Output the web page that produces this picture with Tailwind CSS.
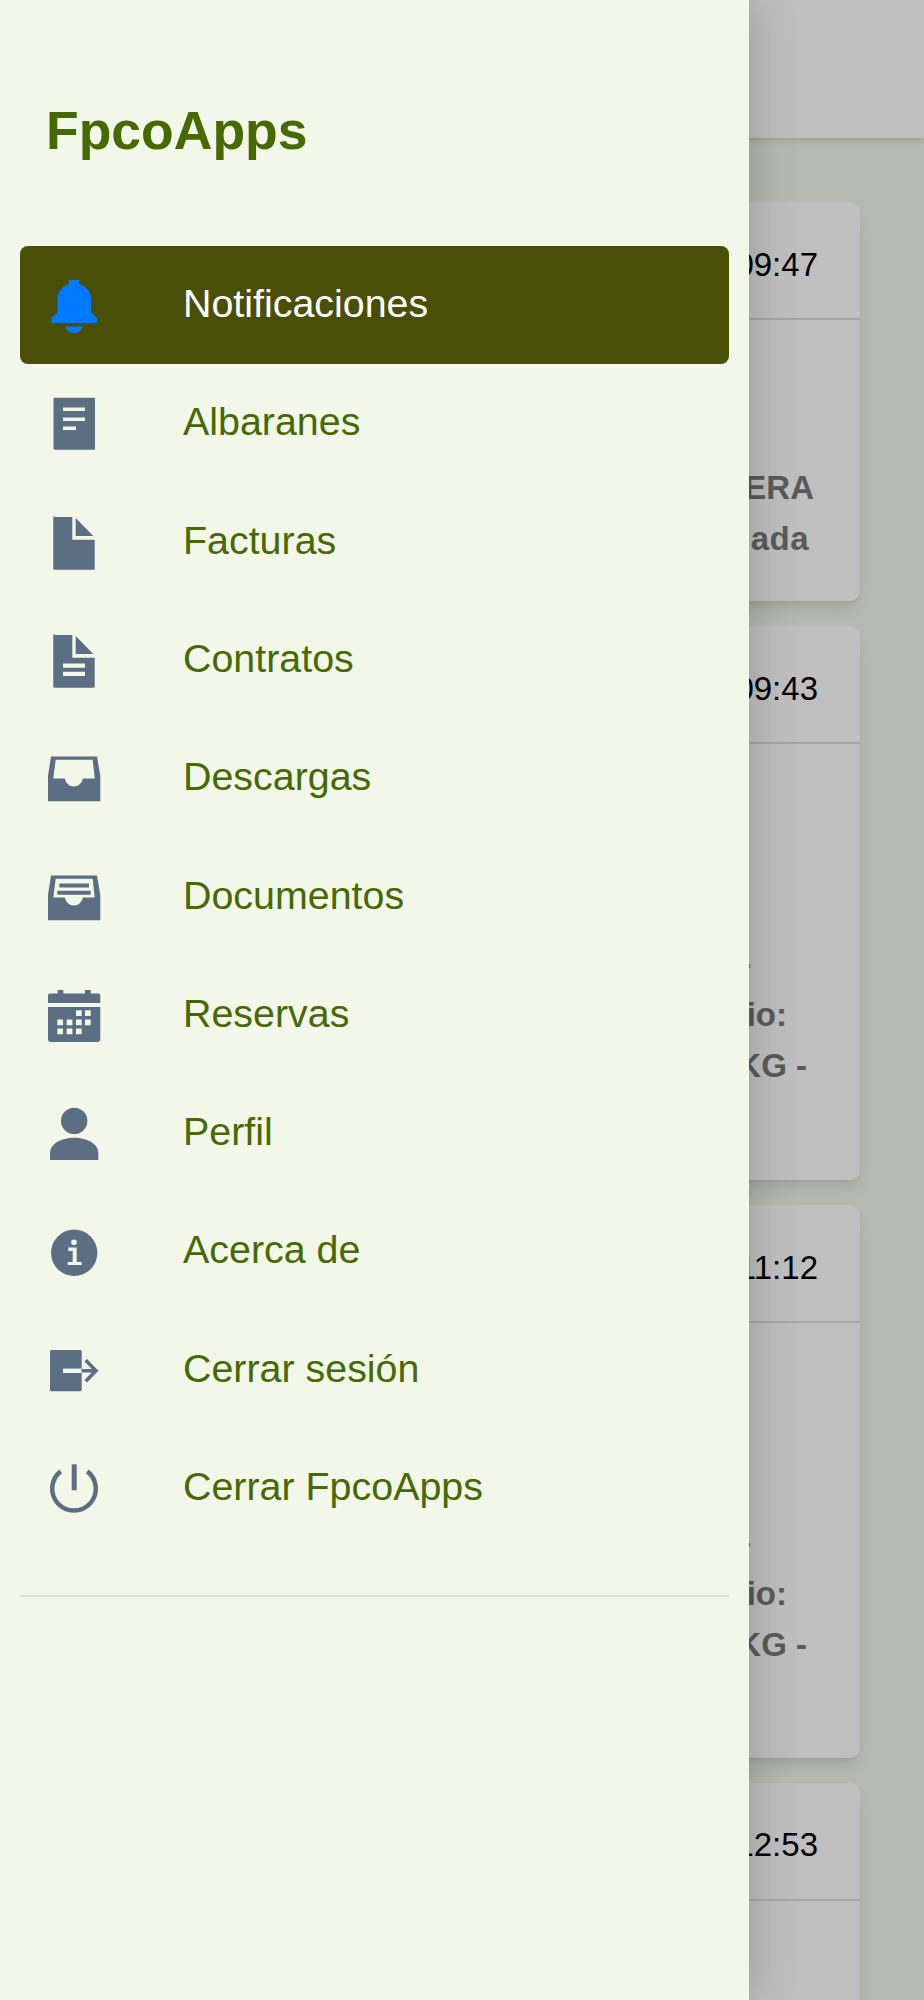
<!DOCTYPE html>
<html lang="es">

<head>
  <meta charset="UTF-8" />
  <meta name="viewport" content="width=device-width, initial-scale=1.0" />
  <title>FpcoApps</title>
  <script src="https://cdn.jsdelivr.net/npm/@tailwindcss/browser@4"></script>
</head>

<body class="bg-[#f3f7ea] font-['Liberation_Sans',Arial,sans-serif]">
  <div class="relative h-[2000px] w-[924px] overflow-hidden">

    <!-- Pantalla de fondo -->
    <header class="h-[138px] bg-white shadow-md"></header>
    <main class="flex flex-col gap-[25px] pl-[64px] pr-[64px] pt-[64px]">

      <article class="h-[399px] shrink-0 rounded-[10px] bg-white shadow-lg">
        <div class="h-[118px] border-b-2 border-[#dedede] pr-[42px] pt-[44px] text-right text-[33px] leading-[37px] text-black">09:47</div>
        <div class="pr-[46px] pt-[142px] text-right text-[33px] font-bold leading-[51px] text-[#787878]">
          <p>ERA</p>
          <p class="pr-[5px] tracking-[0.5px]">ada</p>
        </div>
      </article>

      <article class="h-[554px] shrink-0 rounded-[10px] bg-white shadow-lg">
        <div class="h-[118px] border-b-2 border-[#dedede] pr-[42px] pt-[44px] text-right text-[33px] leading-[37px] text-black">09:43</div>
        <div class="pr-[64px] pt-[194px] text-right text-[33px] font-bold leading-[51px] text-[#787878]">
          <p class="pr-[45px]">-</p>
          <p class="pr-[9px]">io:</p>
          <p class="mr-[-11px]">KG -</p>
        </div>
      </article>

      <article class="h-[553px] shrink-0 rounded-[10px] bg-white shadow-lg">
        <div class="h-[118px] border-b-2 border-[#dedede] pr-[42px] pt-[44px] text-right text-[33px] leading-[37px] text-black">11:12</div>
        <div class="pr-[64px] pt-[194px] text-right text-[33px] font-bold leading-[51px] text-[#787878]">
          <p class="pr-[45px]">-</p>
          <p class="pr-[9px]">io:</p>
          <p class="mr-[-11px]">KG -</p>
        </div>
      </article>

      <article class="h-[554px] shrink-0 rounded-[10px] bg-white shadow-lg">
        <div class="h-[118px] border-b-2 border-[#dedede] pr-[42px] pt-[43px] text-right text-[33px] leading-[37px] text-black">12:53</div>
      </article>
    </main>

    <!-- Capa oscura -->
    <div class="absolute inset-0 bg-black/25"></div>

    <!-- Menu lateral -->
    <aside class="absolute left-0 top-0 h-full w-[749px] bg-[#f3f7ea] px-[20px] shadow-[0_0_45px_rgba(0,0,0,0.22)]">
      <div class="h-[246px] pl-[26px] pt-[105px]">
        <h1 class="text-[53.5px] font-bold leading-[52px] text-[#466900]">FpcoApps</h1>
      </div>

      <nav class="flex flex-col text-[39.4px] text-[#466900]">
        <a class="flex h-[118.3px] items-center rounded-[8px] bg-[#4a4f08] pl-[26px] text-white">
          <svg class="mr-[81px] h-[60px] w-[56px] shrink-0" viewBox="0 0 56 60" fill="#007aff">
            <path d="M23 5h10v4c7.500 2 12 8 12 15v13l6 6v5H5.500v-5l6-6V24c0-7 4.500-13 11.500-15z" />
            <path d="M19 51.500h18c-1.500 4-5 6.500-9 6.500s-7.500-2.500-9-6.500z" />
          </svg>
          <span class="pb-[3px]">Notificaciones</span>
        </a>

        <a class="flex h-[118.3px] items-center pl-[26px]">
          <svg class="mr-[81px] h-[60px] w-[56px] shrink-0" viewBox="0 0 56 60" fill="#5b6e82">
            <rect x="7.500" y="4.700" width="41.500" height="52" rx="1" />
            <path fill="#f3f7ea" d="M17 14.500h22v3.600H17zM17 24.500h22v3.600H17zM17 33.500h13v3.600H17z" />
          </svg>
          <span class="pb-[3px]">Albaranes</span>
        </a>

        <a class="flex h-[118.3px] items-center pl-[26px]">
          <svg class="mr-[81px] h-[60px] w-[56px] shrink-0" viewBox="0 0 56 60" fill="#5b6e82">
            <path d="M8.300 5.100h18v22.600h22.400v29a1 1 0 0 1-1 1H8.300a1 1 0 0 1-1-1v-51.600a1 1 0 0 1 1-1z" />
            <path d="M29.700 6 47.300 24.100H29.700z" />
          </svg>
          <span class="pb-[3px]">Facturas</span>
        </a>

        <a class="flex h-[118.3px] items-center pl-[26px]">
          <svg class="mr-[81px] h-[60px] w-[56px] shrink-0" viewBox="0 0 56 60" fill="#5b6e82">
            <path d="M8.300 5.100h18v22.600h22.400v29a1 1 0 0 1-1 1H8.300a1 1 0 0 1-1-1v-51.600a1 1 0 0 1 1-1z" />
            <path d="M29.700 6 47.300 24.100H29.700z" />
            <path fill="#f3f7ea" d="M17 33.400h22v4.300H17zM17 41.700h22V46H17z" />
          </svg>
          <span class="pb-[3px]">Contratos</span>
        </a>

        <a class="flex h-[118.3px] items-center pl-[26px]">
          <svg class="mr-[81px] h-[60px] w-[56px] shrink-0" viewBox="0 0 56 60" fill="#5b6e82">
            <path d="M5 8.500h46l3.300 19.300v25.400H2V27.800z" />
            <path fill="#f3f7ea" d="M9.700 11.800h37l2 18.700h-12c-.6 4.500-4.300 8-8.800 8s-8.200-3.500-8.900-8H7.300z" />
          </svg>
          <span class="pb-[3px]">Descargas</span>
        </a>

        <a class="flex h-[118.3px] items-center pl-[26px]">
          <svg class="mr-[81px] h-[60px] w-[56px] shrink-0" viewBox="0 0 56 60" fill="#5b6e82">
            <path d="M5 8.500h46l3.300 19.300v25.400H2V27.800z" />
            <path fill="#f3f7ea" d="M9.700 11.800h37l2 18.700h-12c-.6 4.500-4.300 8-8.800 8s-8.200-3.500-8.900-8H7.300z" />
            <path d="M13.300 16.500H43v4H13.300zM11.300 23.800h33.400v4H11.300z" />
          </svg>
          <span class="pb-[3px]">Documentos</span>
        </a>

        <a class="flex h-[118.3px] items-center pl-[26px]">
          <svg class="mr-[81px] h-[60px] w-[56px] shrink-0" viewBox="0 0 56 60" fill="#5b6e82">
            <path d="M11.700 4.900h5.600v3.600h21.700V4.900h5.700v3.600h7.600a2 2 0 0 1 2 2v7.400H2v-7.400a2 2 0 0 1 2-2h7.700z" />
            <path d="M2 21.900h52.300v32a3 3 0 0 1-3 3H5a3 3 0 0 1-3-3z" />
            <path fill="#f3f7ea" d="M30 25.200h5.700v5.700H30zM39 25.200h5.700v5.700H39zM11.300 34.500H17v5.700h-5.700zM20.700 34.500h5.700v5.700h-5.700zM30 34.500h5.700v5.700H30zM39 34.500h5.700v5.700H39zM11.300 43.500H17v5.700h-5.700zM20.700 43.500h5.700v5.700h-5.700zM30 43.500h5.700v5.700H30z" />
          </svg>
          <span class="pb-[3px]">Reservas</span>
        </a>

        <a class="flex h-[118.3px] items-center pl-[26px]">
          <svg class="mr-[81px] h-[60px] w-[56px] shrink-0" viewBox="0 0 56 60" fill="#5b6e82">
            <circle cx="28.200" cy="17.900" r="13.200" />
            <path d="M4 57v-7c0-9 11-15.300 24.200-15.300S52.300 41 52.300 50v7z" />
          </svg>
          <span class="pb-[3px]">Perfil</span>
        </a>

        <a class="flex h-[118.3px] items-center pl-[26px]">
          <svg class="mr-[81px] h-[60px] w-[56px] shrink-0" viewBox="0 0 56 60" fill="#5b6e82">
            <circle cx="28.200" cy="30.800" r="23.200" />
            <circle cx="28" cy="20.300" r="2.800" fill="#f3f7ea" />
            <path fill="#f3f7ea" d="M22.300 25.600h8.400V40h5v3H21.700v-3h5V29h-4.400z" />
          </svg>
          <span class="pb-[3px]">Acerca de</span>
        </a>

        <a class="flex h-[118.3px] items-center pl-[26px]">
          <svg class="mr-[81px] h-[60px] w-[56px] shrink-0" viewBox="0 0 56 60" fill="#5b6e82">
            <rect x="4" y="10" width="31.700" height="41.300" rx="1.500" />
            <path fill="#f3f7ea" d="M17 28.600h18.700V33H17z" />
            <path fill="none" stroke="#5b6e82" stroke-width="3.500" d="M35.700 30.800H49M39.700 20.300 50 30.800 39.700 41.300" />
          </svg>
          <span class="pb-[3px]">Cerrar sesión</span>
        </a>

        <a class="flex h-[118.3px] items-center pl-[26px]">
          <svg class="mr-[81px] h-[60px] w-[56px] shrink-0" viewBox="0 0 56 60" fill="#5b6e82">
            <path fill="none" stroke="#5b6e82" stroke-width="4.500" d="M14.700 13.400A21.800 21.800 0 1 0 41.300 13.400" />
            <path d="M25.700 6.300h5v26h-5z" />
          </svg>
          <span class="pb-[3px]">Cerrar FpcoApps</span>
        </a>
      </nav>

      <hr class="mt-[48px] border-t-2 border-[#dcdfd8]" />
    </aside>
  </div>
</body>

</html>
